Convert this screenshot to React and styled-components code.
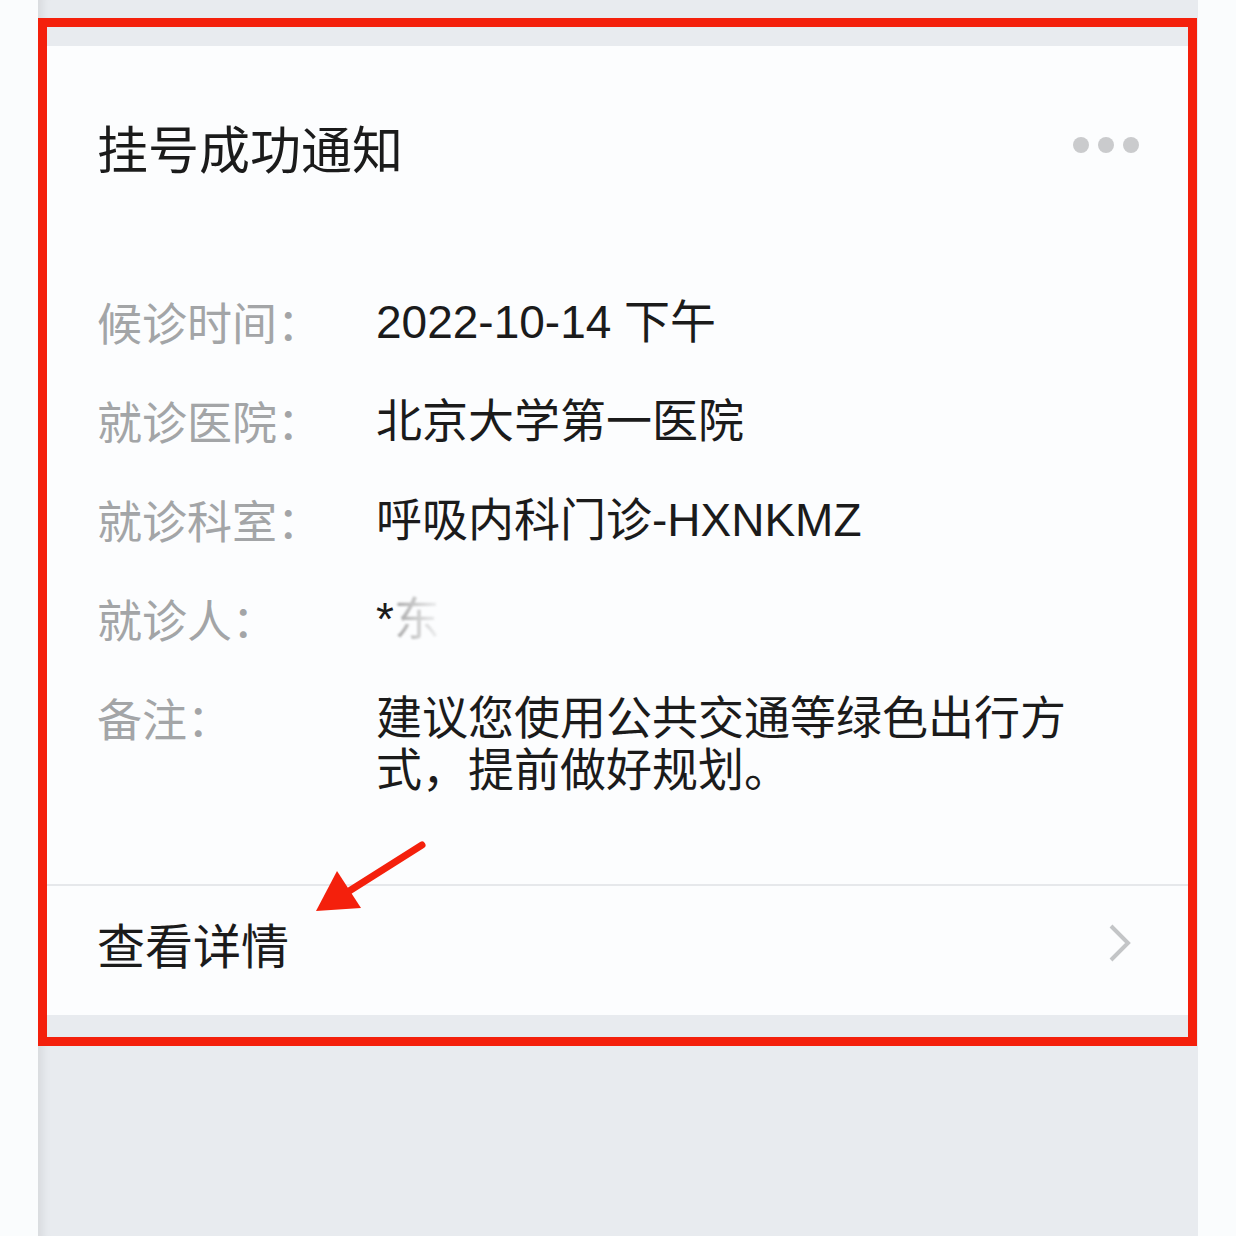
import React from "react";
import styled, { createGlobalStyle } from "styled-components";

const GlobalStyle = createGlobalStyle`
  html, body {
    margin: 0;
    padding: 0;
    background: #fafcfd;
  }
  body {
    font-family: "Liberation Sans", "Noto Sans CJK SC", sans-serif;
  }
`;

const Page = styled.div`
  width: 1236px;
  height: 1236px;
  overflow: hidden;
  display: flex;
  justify-content: center;
`;

const Panel = styled.div`
  width: 1160px;
  height: 100%;
  background: #e8ebef;
  box-shadow: inset 12px 0 10px -8px rgba(0, 0, 0, 0.08);
  padding-top: 18px;
  box-sizing: border-box;
`;

const Highlight = styled.div`
  border: 9px solid #f4200c;
  padding: 19px 0 22px;
  margin-right: 1px;
`;

const Card = styled.div`
  position: relative;
  background: #fcfdfe;
`;

const Header = styled.div`
  display: flex;
  align-items: center;
  justify-content: space-between;
  padding: 71px 49px 0 50px;
`;

const Title = styled.h1`
  margin: 0;
  font-family: "Noto Sans CJK SC", sans-serif;
  font-size: 51px;
  line-height: 60px;
  font-weight: 400;
  color: #1b1b1b;
`;

const Dots = styled.div`
  display: flex;
  gap: 9px;
  margin-top: -4px;
`;

const Dot = styled.span`
  width: 16px;
  height: 16px;
  border-radius: 50%;
  background: #cacbcd;
`;

const Fields = styled.div`
  padding: 119px 50px 88px;
  display: flex;
  flex-direction: column;
  gap: 47px;
`;

const Row = styled.div`
  display: grid;
  grid-template-columns: 279px 1fr;
  font-size: 46px;
  line-height: 52px;
`;

const Label = styled.span`
  font-family: "Noto Sans CJK SC", sans-serif;
  font-size: 45px;
  color: #a3a5a7;
`;

const Value = styled.span`
  color: #1b1b1b;
  max-width: 700px;
`;

const Faded = styled.span`
  display: inline-block;
  color: #9a9a9a;
  filter: blur(1.2px);
  -webkit-mask-image: linear-gradient(to right, rgba(0,0,0,0.9), rgba(0,0,0,0.1));
  mask-image: linear-gradient(to right, rgba(0,0,0,0.9), rgba(0,0,0,0.1));
`;

const Footer = styled.div`
  border-top: 2px solid #e6e8eb;
  display: flex;
  align-items: center;
  justify-content: space-between;
  padding: 31px 56px 46px 50px;
`;

const FooterText = styled.span`
  font-family: "Noto Sans CJK SC", sans-serif;
  font-size: 48px;
  line-height: 52px;
  color: #1b1b1b;
`;

const Arrow = styled.svg`
  position: absolute;
  left: 211px;
  top: 789px;
  pointer-events: none;
`;

const rows = [
  { label: "候诊时间：", value: "2022-10-14 下午" },
  { label: "就诊医院：", value: "北京大学第一医院" },
  { label: "就诊科室：", value: "呼吸内科门诊-HXNKMZ" },
  { label: "就诊人：", value: null },
  { label: "备注：", value: "建议您使用公共交通等绿色出行方式，提前做好规划。" },
];

export default function App() {
  return (
    <>
      <GlobalStyle />
      <Page>
        <Panel>
          <Highlight>
            <Card>
              <Header>
                <Title>挂号成功通知</Title>
                <Dots>
                  <Dot />
                  <Dot />
                  <Dot />
                </Dots>
              </Header>
              <Fields>
                {rows.map((r) => (
                  <Row key={r.label}>
                    <Label>{r.label}</Label>
                    <Value>
                      {r.value !== null ? r.value : (
                        <>
                          *<Faded>东</Faded>
                        </>
                      )}
                    </Value>
                  </Row>
                ))}
              </Fields>
              <Footer>
                <FooterText>查看详情</FooterText>
                <svg width="24" height="40" viewBox="0 0 24 40">
                  <polyline points="3,3 20,20 3,37" fill="none" stroke="#c3c5c7" strokeWidth="4" />
                </svg>
              </Footer>
              <Arrow width="180" height="140" viewBox="0 0 180 140">
                <line x1="164" y1="10" x2="88" y2="58" stroke="#f4200c" strokeWidth="7" strokeLinecap="round" />
                <polygon points="58,76 79,36 103,73" fill="#f4200c" />
              </Arrow>
            </Card>
          </Highlight>
        </Panel>
      </Page>
    </>
  );
}
